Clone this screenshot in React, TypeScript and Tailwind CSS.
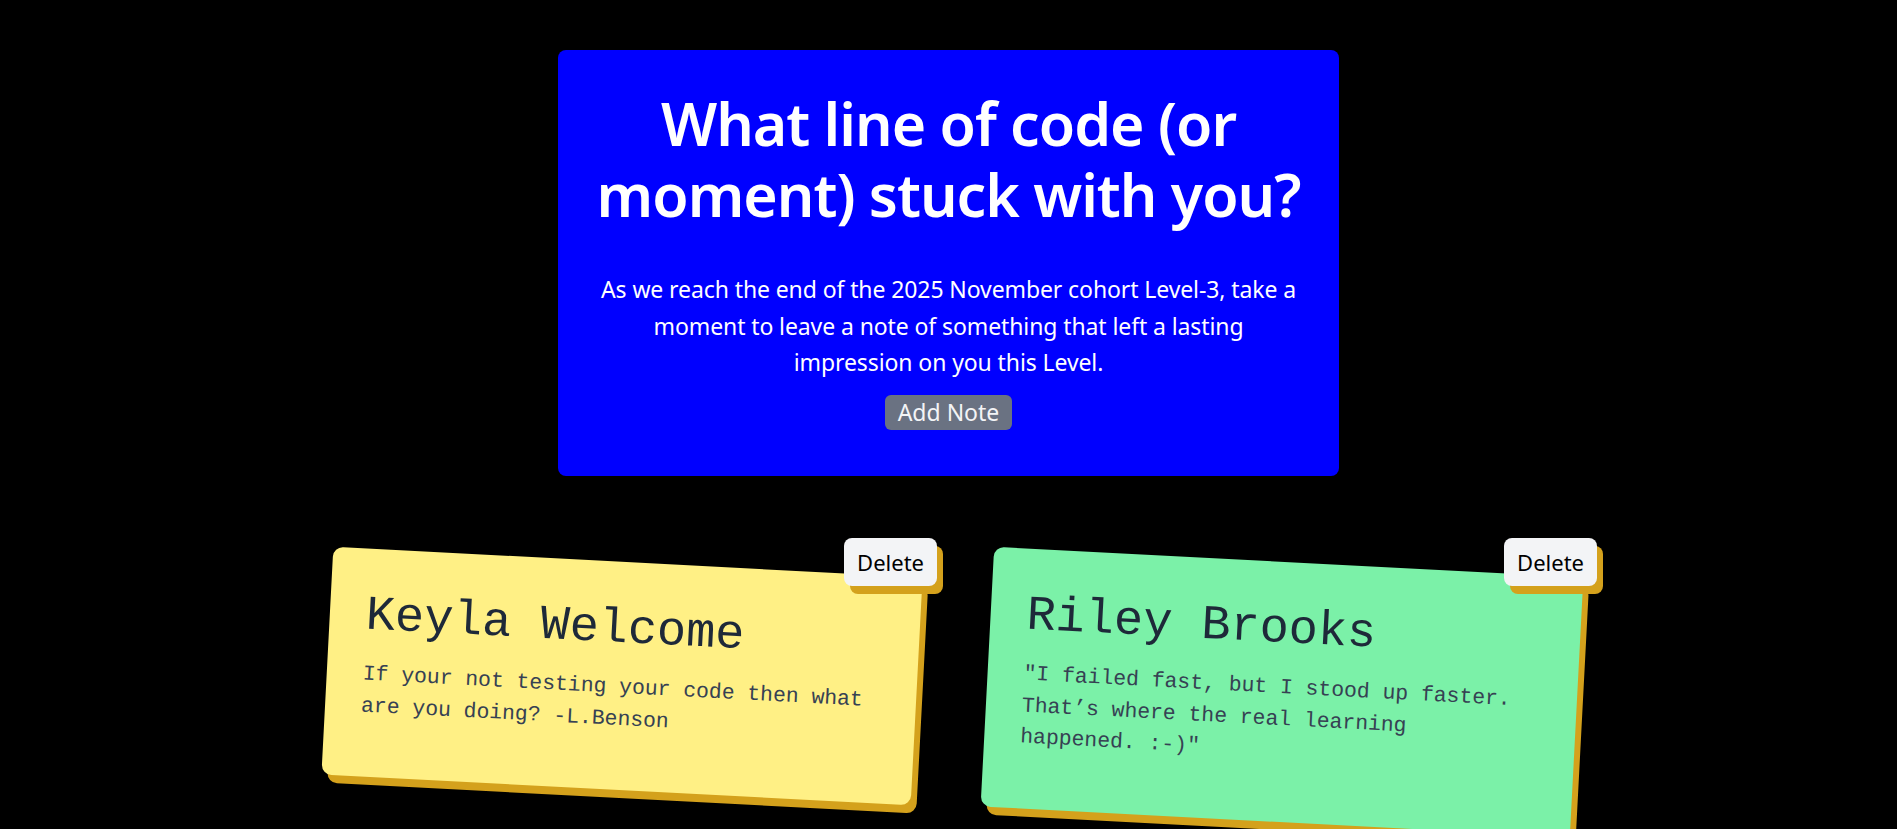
import type React from 'react'

interface Note {
  name: string
  text: string
  color: string
}

const notes: Note[] = [
  {
    name: 'Keyla Welcome',
    text: 'If your not testing your code then what are you doing? -L.Benson',
    color: 'bg-yellow-200',
  },
  {
    name: 'Riley Brooks',
    text: '"I failed fast, but I stood up faster. That’s where the real learning happened. :-)"',
    color: 'bg-green-300',
  },
]

const NoteCard: React.FC<{ note: Note }> = ({ note }) => {
  return (
    <div className="relative w-[590px]">
      <div
        className={`${note.color} rotate-3 rounded-[10px] pt-[44px] pl-[36px] pr-[46px] pb-[55px] shadow-[6px_8px_0_#d4a11c]`}
      >
        <h2 className="font-['Liberation_Mono',monospace] text-[48.6px] leading-[48px] text-gray-800">
          {note.name}
        </h2>
        <p className="mt-[18px] font-['Liberation_Mono',monospace] text-[21.4px] leading-[31.5px] text-gray-700">
          {note.text}
        </p>
      </div>
      <button className="absolute -top-[24px] -right-[20px] rounded-lg bg-gray-100 px-[13px] py-[9px] text-[22px] leading-[30px] text-black shadow-[6px_8px_0_#d4a11c]">
        Delete
      </button>
    </div>
  )
}

export default function App() {
  return (
    <div className="h-screen overflow-hidden bg-black font-['Noto_Sans',sans-serif]">
      <div className="mx-auto mt-[50px] w-[781px] rounded-lg bg-[#0000ff] px-[34px] pt-[38px] pb-[46px] text-center text-white">
        <h1 className="-mx-[10px] text-[59px] leading-[71px] font-semibold tracking-[-1px]">
          What line of code (or moment) stuck with you?
        </h1>
        <p className="mt-[41px] text-[23px] leading-[36.5px] tracking-[-0.1px]">
          As we reach the end of the 2025 November cohort Level-3, take a moment to leave a note of
          something that left a lasting impression on you this Level.
        </p>
        <button className="mt-[14px] rounded-md bg-gray-500 px-[13px] py-[3px] text-[23px] leading-[29px] text-gray-100">
          Add Note
        </button>
      </div>

      <div className="mt-[86px] flex items-start justify-center gap-[70px] pl-[7px]">
        {notes.map((note) => (
          <NoteCard key={note.name} note={note} />
        ))}
      </div>
    </div>
  )
}
